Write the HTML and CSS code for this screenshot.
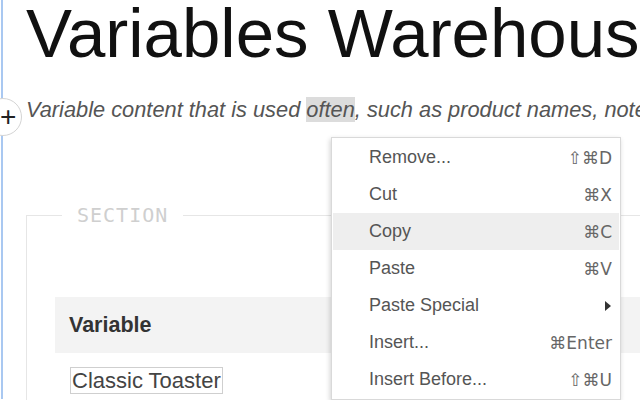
FILE: index.html
```html
<!DOCTYPE html>
<html>
<head>
<meta charset="utf-8">
<link rel="stylesheet" href="styles.css">
</head>
<body>
<div class="page">
  <div class="doc">
    <h1 class="title">Variables Warehouse</h1>
    <p class="subtitle">Variable content that is used <span class="hl">often</span>, such as product names, notes</p>
    <fieldset class="section">
      <legend class="section-label">SECTION</legend>
      <table class="vars">
        <thead>
          <tr><th>Variable</th><th></th></tr>
        </thead>
        <tbody>
          <tr><td><span class="field">Classic Toaster</span></td><td></td></tr>
        </tbody>
      </table>
    </fieldset>
  </div>
  <div class="add-btn"><span class="plus">+</span></div>
  <ul class="menu">
    <li class="item"><span class="label">Remove...</span><span class="key">⇧⌘D</span></li>
    <li class="item"><span class="label">Cut</span><span class="key">⌘X</span></li>
    <li class="item active"><span class="label">Copy</span><span class="key">⌘C</span></li>
    <li class="item"><span class="label">Paste</span><span class="key">⌘V</span></li>
    <li class="item"><span class="label">Paste Special</span><span class="arrow"></span></li>
    <li class="item"><span class="label">Insert...</span><span class="key">⌘Enter</span></li>
    <li class="item"><span class="label">Insert Before...</span><span class="key">⇧⌘U</span></li>
  </ul>
</div>
</body>
</html>
```
FILE: styles.css
```css
html, body {
  margin: 0;
  padding: 0;
  width: 640px;
  height: 400px;
  overflow: hidden;
  background: #fff;
  font-family: "Liberation Sans", Arial, sans-serif;
}

.page {
  position: relative;
  width: 640px;
  height: 400px;
  padding-left: 1px;
  box-sizing: border-box;
  overflow: hidden;
}

.doc {
  border-left: 2px solid #a9c8f1;
  padding-left: 23px;
  height: 400px;
  width: 900px;
}

.title {
  margin: -1px 0 0 0;
  font-size: 69px;
  font-weight: normal;
  line-height: 69px;
  color: #111;
  white-space: nowrap;
}

.subtitle {
  margin: 27px 0 0 0;
  font-size: 21.8px;
  line-height: 30px;
  font-style: italic;
  color: #555;
  white-space: nowrap;
}

.hl {
  background: #dcdcdc;
}

.section {
  margin: 78px 0 0 0;
  padding: 0;
  border: 1px solid #e6e6e6;
  border-right: none;
  min-width: 0;
  width: 860px;
  height: 300px;
}

.section-label {
  margin-left: 35px;
  padding: 0 15px;
  font-family: "DejaVu Sans Mono", monospace;
  font-size: 20px;
  letter-spacing: 1px;
  line-height: 24px;
  color: #cfcfcf;
}

.vars {
  margin: 70px 0 0 28px;
  border-collapse: collapse;
  width: 700px;
}

.vars th {
  background: #f3f3f3;
  height: 56px;
  padding: 0 0 0 14px;
  text-align: left;
  font-size: 21.5px;
  font-weight: bold;
  color: #333;
}

.vars td {
  padding: 14px 0 0 15px;
  vertical-align: top;
}

.field {
  display: inline-block;
  border: 1px solid #cfcfcf;
  padding: 0 1px;
  height: 25px;
  line-height: 26px;
  font-size: 22px;
  color: #444;
}

.add-btn {
  position: absolute;
  left: -16px;
  top: 98px;
  width: 38px;
  height: 38px;
  border: 1px solid #d4d4d4;
  border-radius: 50%;
  background: #fff;
  box-sizing: border-box;
}

.plus {
  position: absolute;
  left: 15px;
  top: 1px;
  font-size: 28px;
  line-height: 34px;
  color: #222;
  font-family: "Liberation Sans", sans-serif;
  font-weight: normal;
}

.menu {
  position: absolute;
  left: 331px;
  top: 137px;
  width: 290px;
  margin: 0;
  padding: 1px;
  list-style: none;
  background: #fff;
  border: 1px solid #d9d9d9;
  box-shadow: -1px 2px 5px rgba(0, 0, 0, 0.18);
  box-sizing: border-box;
}

.item {
  display: flex;
  align-items: center;
  justify-content: space-between;
  height: 37px;
  padding: 0 7px 0 36px;
  font-size: 18px;
  color: #555;
}

.item.active {
  background: #eeeeee;
}

.key {
  font-family: "DejaVu Sans", "Liberation Sans", sans-serif;
  font-size: 17px;
  color: #666;
}

.arrow {
  width: 0;
  height: 0;
  border-left: 6px solid #333;
  border-top: 5px solid transparent;
  border-bottom: 5px solid transparent;
  margin-right: 1px;
}
```
